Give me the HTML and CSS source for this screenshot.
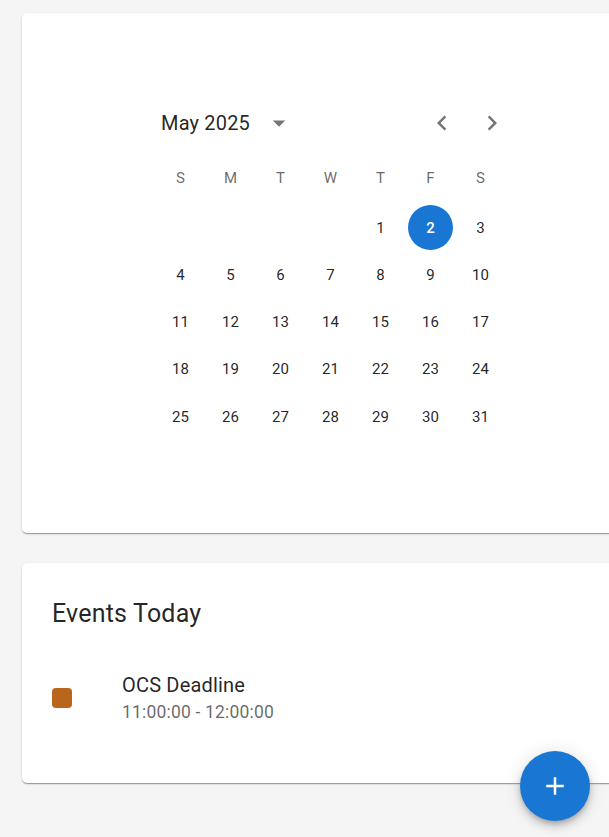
FILE: index.html
```html
<!DOCTYPE html>
<html>
<head>
<meta charset="utf-8">
<link rel="stylesheet" href="styles.css">
</head>
<body>
<div class="page">
  <section class="card card-cal">
    <div class="calendar">
      <div class="cal-header">
        <div class="cal-label">
          <span class="month">May 2025</span>
          <button class="icon-btn drop" aria-label="switch view">
            <svg viewBox="0 0 24 24" width="30" height="30"><path d="M7 10l5 5 5-5z"/></svg>
          </button>
        </div>
        <div class="cal-nav">
          <button class="icon-btn nav" aria-label="previous month">
            <svg viewBox="0 0 24 24" width="30" height="30"><path d="M15.41 7.41 14 6l-6 6 6 6 1.41-1.41L10.83 12z"/></svg>
          </button>
          <button class="icon-btn nav" aria-label="next month">
            <svg viewBox="0 0 24 24" width="30" height="30"><path d="M10 6 8.59 7.41 13.17 12l-4.58 4.59L10 18l6-6z"/></svg>
          </button>
        </div>
      </div>
      <div class="weekdays">
        <span>S</span><span>M</span><span>T</span><span>W</span><span>T</span><span>F</span><span>S</span>
      </div>
      <div class="days">
        <span></span><span></span><span></span><span></span>
        <button class="day">1</button><button class="day selected">2</button><button class="day">3</button>
        <button class="day">4</button><button class="day">5</button><button class="day">6</button><button class="day">7</button><button class="day">8</button><button class="day">9</button><button class="day">10</button>
        <button class="day">11</button><button class="day">12</button><button class="day">13</button><button class="day">14</button><button class="day">15</button><button class="day">16</button><button class="day">17</button>
        <button class="day">18</button><button class="day">19</button><button class="day">20</button><button class="day">21</button><button class="day">22</button><button class="day">23</button><button class="day">24</button>
        <button class="day">25</button><button class="day">26</button><button class="day">27</button><button class="day">28</button><button class="day">29</button><button class="day">30</button><button class="day">31</button>
      </div>
    </div>
  </section>

  <section class="card card-events">
    <h2 class="events-title">Events Today</h2>
    <ul class="event-list">
      <li class="event">
        <div class="event-icon"><span class="swatch"></span></div>
        <div class="event-text">
          <div class="event-name">OCS Deadline</div>
          <div class="event-time">11:00:00 - 12:00:00</div>
        </div>
      </li>
    </ul>
  </section>
</div>
<button class="fab" aria-label="add">
  <svg viewBox="0 0 24 24" width="30" height="30"><path d="M19 13h-6v6h-2v-6H5v-2h6V5h2v6h6z"/></svg>
</button>
</body>
</html>
```
FILE: styles.css
```css
html, body {
  margin: 0;
  padding: 0;
  overflow: hidden;
  height: 100%;
}
body {
  background: #f5f5f5;
  font-family: Roboto, "Liberation Sans", Arial, sans-serif;
  color: rgba(0, 0, 0, 0.87);
}
.page {
  padding: 13px 0 0 22px;
  display: flex;
  flex-direction: column;
  gap: 30px;
}
.card {
  width: 617px;
  box-sizing: border-box;
  background: #fff;
  border-radius: 5px;
  box-shadow: 0px 2px 1px -1px rgba(0,0,0,0.2), 0px 1px 1px 0px rgba(0,0,0,0.14), 0px 1px 3px 0px rgba(0,0,0,0.12);
}
.card-cal {
  height: 520px;
  padding-top: 90px;
  display: flex;
  justify-content: center;
}
.calendar {
  width: 400px;
  display: flex;
  flex-direction: column;
  align-items: center;
}
.cal-header {
  width: 100%;
  box-sizing: border-box;
  height: 40px;
  padding: 0 24px 0 30.5px;
  display: flex;
  align-items: center;
  justify-content: space-between;
}
.cal-label {
  display: flex;
  align-items: center;
}
.month {
  font-size: 20px;
  font-weight: 400;
  letter-spacing: 0.009em;
}
.icon-btn {
  border: 0;
  background: none;
  padding: 0;
  margin: 0;
  display: flex;
  align-items: center;
  justify-content: center;
  fill: rgba(0, 0, 0, 0.54);
  cursor: pointer;
}
.drop {
  width: 42.5px;
  height: 42.5px;
  margin-left: 7.5px;
}
.cal-nav {
  display: flex;
  gap: 20px;
}
.nav {
  width: 30px;
  height: 40px;
}
.weekdays {
  margin-top: 12px;
  display: grid;
  grid-template-columns: repeat(7, 50px);
  height: 45px;
  align-items: center;
  justify-items: center;
  font-size: 15px;
  color: rgba(0, 0, 0, 0.6);
}
.days {
  margin-top: 5px;
  display: grid;
  grid-template-columns: repeat(7, 50px);
  grid-auto-rows: 45px;
  row-gap: 2.3px;
  justify-items: center;
  align-items: center;
}
.day {
  width: 45px;
  height: 45px;
  border-radius: 50%;
  border: 0;
  background: transparent;
  padding: 0;
  font-family: inherit;
  font-size: 15px;
  color: rgba(0, 0, 0, 0.87);
  cursor: pointer;
}
.day.selected {
  background: #1976d2;
  color: #fff;
  font-weight: 500;
}
.card-events {
  height: 220px;
  padding: 31px 30px 0 30px;
}
.events-title {
  margin: 0;
  font-size: 25px;
  font-weight: 400;
  line-height: 40px;
  letter-spacing: 0.0075em;
  color: rgba(0, 0, 0, 0.87);
}
.event-list {
  list-style: none;
  margin: 21px 0 0 0;
  padding: 0;
}
.event {
  display: flex;
  align-items: center;
  padding: 10px 0;
}
.event-icon {
  min-width: 70px;
  display: flex;
  align-items: center;
}
.swatch {
  width: 20px;
  height: 20px;
  border-radius: 4px;
  background: #b9651c;
}
.event-text {
  margin: 5px 0;
}
.event-name {
  font-size: 20px;
  line-height: 30px;
  letter-spacing: 0.00938em;
  color: rgba(0, 0, 0, 0.87);
}
.event-time {
  font-size: 17.5px;
  line-height: 25px;
  letter-spacing: 0.01071em;
  color: rgba(0, 0, 0, 0.6);
}
.fab {
  position: fixed;
  right: 19px;
  bottom: 16px;
  width: 70px;
  height: 70px;
  border-radius: 50%;
  border: 0;
  padding: 0;
  background: #1976d2;
  fill: #fff;
  display: flex;
  align-items: center;
  justify-content: center;
  box-shadow: 0px 3px 5px -1px rgba(0,0,0,0.2), 0px 6px 10px 0px rgba(0,0,0,0.14), 0px 1px 18px 0px rgba(0,0,0,0.12);
}
```
